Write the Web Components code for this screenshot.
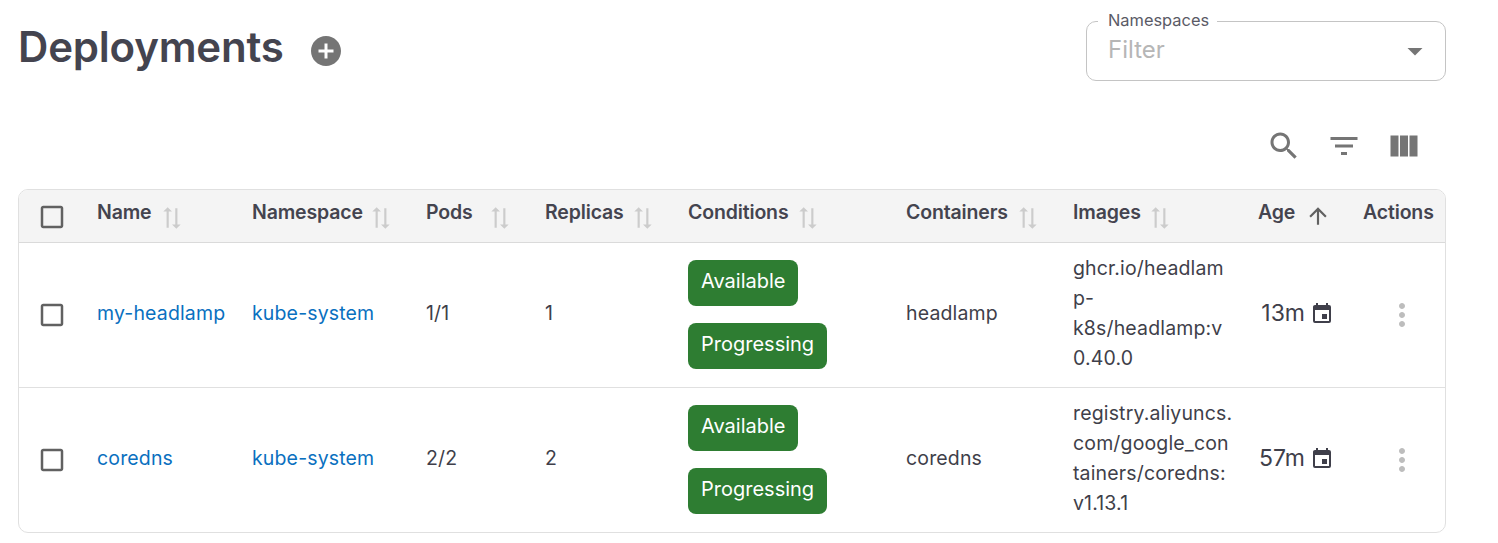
<!DOCTYPE html>
<html>
<head>
<meta charset="utf-8">
<title>Deployments</title>
<style>
  html, body { margin: 0; padding: 0; background: #fff; }
  body {
    font-family: Inter, "Noto Sans", sans-serif;
    color: #3f3f4a;
    --cols: 63px 155px 174px 119px 143px 218px 167px 185px 105px 99px;
  }
</style>
</head>
<body>
<deploy-page>
  <page-heading title="Deployments"></page-heading>
  <table-toolbar></table-toolbar>
  <deploy-table>
    <deploy-row header>
      <data-cell box head><ui-icon name="checkbox" size="30" color="#616161"></ui-icon></data-cell>
      <head-cell>Name</head-cell>
      <head-cell gap="5">Namespace</head-cell>
      <head-cell gap="14">Pods</head-cell>
      <head-cell gap="6">Replicas</head-cell>
      <head-cell>Conditions</head-cell>
      <head-cell>Containers</head-cell>
      <head-cell gap="6">Images</head-cell>
      <head-cell sorted gap="10">Age</head-cell>
      <head-cell plain>Actions</head-cell>
    </deploy-row>
    <deploy-row>
      <data-cell box><ui-icon name="checkbox" size="30" color="#616161"></ui-icon></data-cell>
      <data-cell><a-link>my-headlamp</a-link></data-cell>
      <data-cell><a-link>kube-system</a-link></data-cell>
      <data-cell>1/1</data-cell>
      <data-cell>1</data-cell>
      <data-cell stack><status-chip>Available</status-chip><status-chip>Progressing</status-chip></data-cell>
      <data-cell>headlamp</data-cell>
      <data-cell wrap>ghcr.io/headlam<br>p-<br>k8s/headlamp:v<br>0.40.0</data-cell>
      <age-cell>13m</age-cell>
      <action-cell></action-cell>
    </deploy-row>
    <deploy-row last>
      <data-cell box><ui-icon name="checkbox" size="30" color="#616161"></ui-icon></data-cell>
      <data-cell><a-link>coredns</a-link></data-cell>
      <data-cell><a-link>kube-system</a-link></data-cell>
      <data-cell>2/2</data-cell>
      <data-cell>2</data-cell>
      <data-cell stack><status-chip>Available</status-chip><status-chip>Progressing</status-chip></data-cell>
      <data-cell>coredns</data-cell>
      <data-cell wrap>registry.aliyuncs.<br>com/google_con<br>tainers/coredns:<br>v1.13.1</data-cell>
      <age-cell>57m</age-cell>
      <action-cell></action-cell>
    </deploy-row>
  </deploy-table>
</deploy-page>

<script>
const ICONS = {
  search: 'M15.5 14h-.79l-.28-.27C15.41 12.59 16 11.11 16 9.5 16 5.91 13.09 3 9.5 3S3 5.91 3 9.5 5.91 16 9.5 16c1.61 0 3.09-.59 4.23-1.57l.27.28v.79l5 4.99L20.49 19l-4.99-5zm-6 0C7.01 14 5 11.99 5 9.5S7.01 5 9.5 5 14 7.01 14 9.5 11.99 14 9.5 14z',
  filter: 'M10 18h4v-2h-4v2zM3 6v2h18V6H3zm3 7h12v-2H6v2z',
  columns: 'M14.67 5v14H9.33V5h5.34zm1 14H21V5h-5.33v14zm-7.34 0V5H3v14h5.33z',
  plus: 'M12 2C6.48 2 2 6.48 2 12s4.48 10 10 10 10-4.48 10-10S17.52 2 12 2zm5 11h-4v4h-2v-4H7v-2h4V7h2v4h4v2z',
  checkbox: 'M19 5v14H5V5h14m0-2H5c-1.1 0-2 .9-2 2v14c0 1.1.9 2 2 2h14c1.1 0 2-.9 2-2V5c0-1.1-.9-2-2-2z',
  caret: 'M7 10l5 5 5-5z',
  sort: 'M18 12l4-4-4-4v3H3v2h15zM6 12l-4 4 4 4v-3h15v-2H6z',
  up: 'M4 12l1.41 1.41L11 7.83V20h2V7.83l5.58 5.59L20 12l-8-8-8 8z',
  calendar: 'M19 19H5V8h14m-3-7v2H8V1H6v2H5c-1.11 0-2 .89-2 2v14a2 2 0 0 0 2 2h14a2 2 0 0 0 2-2V5a2 2 0 0 0-2-2h-1V1m-1 11h-5v5h5v-5z',
  dots: 'M12 8c1.1 0 2-.9 2-2s-.9-2-2-2-2 .9-2 2 .9 2 2 2zm0 2c-1.1 0-2 .9-2 2s.9 2 2 2 2-.9 2-2-.9-2-2-2zm0 6c-1.1 0-2 .9-2 2s.9 2 2 2 2-.9 2-2-.9-2-2-2z'
};

class UiIcon extends HTMLElement {
  connectedCallback() {
    const size = this.getAttribute('size') || 24;
    const color = this.getAttribute('color') || 'currentColor';
    const turn = this.hasAttribute('turn') ? 'transform="rotate(90 12 12)"' : '';
    this.attachShadow({ mode: 'open' }).innerHTML = `
      <style>
        :host { display: block; flex: none; width: ${size}px; height: ${size}px; }
        svg { display: block; }
      </style>
      <svg width="${size}" height="${size}" viewBox="0 0 24 24" fill="${color}">
        <path ${turn} d="${ICONS[this.getAttribute('name')]}"></path>
      </svg>`;
  }
}

class DeployPage extends HTMLElement {
  constructor() {
    super();
    this.attachShadow({ mode: 'open' }).innerHTML = `
      <style>
        :host { display: block; padding: 0 52px 0 18px; }
      </style>
      <slot></slot>`;
  }
}

class PageHeading extends HTMLElement {
  connectedCallback() {
    this.attachShadow({ mode: 'open' }).innerHTML = `
      <style>
        :host { display: flex; justify-content: space-between; height: 81px; }
        .left { display: flex; align-items: center; gap: 24px; height: 94px; }
        h1 { margin: 0; font-size: 42px; font-weight: 600; color: #44444f; letter-spacing: -0.2px; line-height: 94px; }
        .left ui-icon { margin-top: 8px; }
        fieldset {
          box-sizing: border-box;
          width: 360px; height: 60px;
          margin: 21px 0 0; padding: 0 12px 4px 21px;
          border: 1px solid #c4c4c4; border-radius: 10px;
          display: flex; align-items: center;
        }
        legend {
          margin-left: -10px;
          padding: 0 8px 0 10px;
          font-size: 16.4px; line-height: 16px; color: #5a5a66;
          height: 0; position: relative; top: -10px;
        }
        .filter { font-size: 24px; color: #b6b6b6; flex: 1; }
        fieldset ui-icon { margin-top: 4px; }
      </style>
      <div class="left">
        <h1>${this.getAttribute('title')}</h1>
        <ui-icon name="plus" size="36" color="#757575"></ui-icon>
      </div>
      <fieldset>
        <legend>Namespaces</legend>
        <span class="filter">Filter</span>
        <ui-icon name="caret" size="36" color="#757575"></ui-icon>
      </fieldset>`;
  }
}

class TableToolbar extends HTMLElement {
  connectedCallback() {
    this.attachShadow({ mode: 'open' }).innerHTML = `
      <style>
        :host { display: flex; justify-content: flex-end; gap: 24px; padding: 47px 24px 25px 0; }
      </style>
      <ui-icon name="search" size="36" color="#757575"></ui-icon>
      <ui-icon name="filter" size="36" color="#757575"></ui-icon>
      <ui-icon name="columns" size="36" color="#757575"></ui-icon>`;
  }
}

class DeployTable extends HTMLElement {
  constructor() {
    super();
    this.attachShadow({ mode: 'open' }).innerHTML = `
      <style>
        :host {
          display: block; box-sizing: border-box;
          border: 1px solid #e0e0e0; border-radius: 10px; overflow: hidden;
          font-size: 20px;
        }
      </style>
      <slot></slot>`;
  }
}

class DeployRow extends HTMLElement {
  constructor() {
    super();
    this.attachShadow({ mode: 'open' }).innerHTML = `
      <style>
        :host {
          display: grid; grid-template-columns: var(--cols);
          margin-right: -1px; margin-left: -1px;
          height: 145px; box-sizing: border-box;
          border-bottom: 1px solid #e0e0e0;
        }
        :host([header]) { height: 53px; background: #f4f4f4; border-bottom: 1px solid #dadada; }
        :host([last]) { border-bottom: 0; height: 144px; }
      </style>
      <slot></slot>`;
  }
}

class DataCell extends HTMLElement {
  constructor() {
    super();
    this.attachShadow({ mode: 'open' }).innerHTML = `
      <style>
        :host {
          display: flex; align-items: center; padding: 0 16px 4px;
          box-sizing: border-box; min-width: 0; white-space: nowrap;
          font-size: 19.5px; letter-spacing: 0.15px; color: #3f3f4a;
        }
        :host([box]) { padding: 0 0 0 19px; }
        :host([box][head]) { padding-top: 1px; }
        :host([stack]) { flex-direction: column; align-items: flex-start; justify-content: center; gap: 17px; padding-bottom: 2px; }
        :host([wrap]) { display: block; align-self: center; padding-bottom: 4px; line-height: 30px; letter-spacing: 0.15px; }
      </style>
      <slot></slot>`;
  }
}

class HeadCell extends HTMLElement {
  connectedCallback() {
    const sorted = this.hasAttribute('sorted');
    const icon = this.hasAttribute('plain') ? '' : sorted
      ? '<ui-icon class="up" name="up" size="26" color="#616161"></ui-icon>'
      : '<ui-icon name="sort" turn size="26" color="#cccccc"></ui-icon>';
    this.attachShadow({ mode: 'open' }).innerHTML = `
      <style>
        :host {
          display: flex; align-items: center; gap: ${this.getAttribute('gap') || 7}px;
          padding: 0 0 0 16px; white-space: nowrap;
          font-size: 19.5px; font-weight: 600; letter-spacing: -0.15px; color: #44444f;
        }
        span { margin-bottom: 9px; }
        ui-icon { margin-top: 3px; }
        ui-icon.up { margin-top: -1px; }
      </style>
      <span><slot></slot></span>${icon}`;
  }
}

class ALink extends HTMLElement {
  constructor() {
    super();
    this.attachShadow({ mode: 'open' }).innerHTML = `
      <style>
        :host { display: inline; color: #0a70c0; }
      </style>
      <slot></slot>`;
  }
}

class StatusChip extends HTMLElement {
  constructor() {
    super();
    this.attachShadow({ mode: 'open' }).innerHTML = `
      <style>
        :host {
          display: inline-flex; align-items: center; height: 46px; box-sizing: border-box;
          padding: 0 13px 4px; border-radius: 8px;
          background: #2e7d32; color: #fff; font-size: 20px; letter-spacing: 0;
        }
      </style>
      <slot></slot>`;
  }
}

class AgeCell extends HTMLElement {
  constructor() {
    super();
    this.attachShadow({ mode: 'open' }).innerHTML = `
      <style>
        :host {
          display: flex; align-items: center; justify-content: flex-end; gap: 5px;
          padding: 0 13px 2px 0; font-size: 23px; color: #3f3f4a; white-space: nowrap;
        }
        span { padding-bottom: 2px; }
      </style>
      <span><slot></slot></span>
      <ui-icon name="calendar" size="24" color="#3f3f4a"></ui-icon>`;
  }
}

class ActionCell extends HTMLElement {
  constructor() {
    super();
    this.attachShadow({ mode: 'open' }).innerHTML = `
      <style>
        :host { display: flex; align-items: center; padding-left: 37px; }
      </style>
      <ui-icon name="dots" size="36" color="#bdbdbd"></ui-icon>`;
  }
}

customElements.define('ui-icon', UiIcon);
customElements.define('deploy-page', DeployPage);
customElements.define('page-heading', PageHeading);
customElements.define('table-toolbar', TableToolbar);
customElements.define('deploy-table', DeployTable);
customElements.define('deploy-row', DeployRow);
customElements.define('data-cell', DataCell);
customElements.define('head-cell', HeadCell);
customElements.define('a-link', ALink);
customElements.define('status-chip', StatusChip);
customElements.define('age-cell', AgeCell);
customElements.define('action-cell', ActionCell);
</script>
</body>
</html>
